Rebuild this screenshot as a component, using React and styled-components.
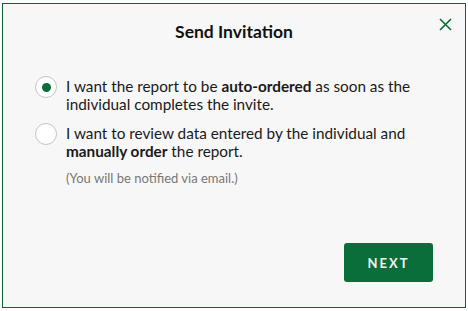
import React, { useState } from "react";
import styled, { createGlobalStyle } from "styled-components";

const GlobalStyle = createGlobalStyle`
  body {
    margin: 0;
    background: #ffffff;
    font-family: "Lato", "Open Sans", sans-serif;
  }
`;

const Modal = styled.div`
  box-sizing: border-box;
  position: relative;
  margin: 3px 0 0 2px;
  width: 464px;
  height: 305px;
  background: #f7f7f7;
  border: 1px solid #0b6336;
  display: flex;
  flex-direction: column;
  padding: 17px 32px 25px 32px;
`;

const Title = styled.h2`
  margin: 0;
  text-align: center;
  font-size: 17.5px;
  font-weight: 700;
  color: #111;
  line-height: 22px;
`;

const CloseButton = styled.button`
  position: absolute;
  top: 12px;
  right: 12px;
  border: none;
  background: none;
  padding: 0;
  width: 16px;
  height: 16px;
  cursor: pointer;
  display: flex;
  align-items: center;
  justify-content: center;
`;

const Options = styled.div`
  margin-top: 34px;
  display: flex;
  flex-direction: column;
  gap: 11px;
`;

const Option = styled.label`
  display: flex;
  align-items: flex-start;
  gap: 9px;
  cursor: pointer;
`;

const Radio = styled.span`
  box-sizing: border-box;
  flex: none;
  width: 22px;
  height: 22px;
  border-radius: 50%;
  border: 1px solid #c4c4c4;
  background: #fff;
  display: flex;
  align-items: center;
  justify-content: center;
  margin-top: -1px;

  &::after {
    content: "";
    width: 9px;
    height: 9px;
    border-radius: 50%;
    background: ${(p) => (p.$checked ? "#0b6b3a" : "transparent")};
  }
`;

const OptionText = styled.div`
  font-size: 15.3px;
  line-height: 18px;
  color: #1a1a1a;

  b {
    font-weight: 700;
  }
`;

const Note = styled.div`
  margin: 10px 0 0 31px;
  font-size: 13px;
  color: #777;
`;

const Footer = styled.div`
  margin-top: auto;
  display: flex;
  justify-content: flex-end;
`;

const NextButton = styled.button`
  width: 89px;
  height: 39px;
  border: none;
  border-radius: 3px;
  background: #0a6e3a;
  color: #f2f2f2;
  font-family: "Lato", sans-serif;
  font-size: 13px;
  font-weight: 700;
  letter-spacing: 2px;
  cursor: pointer;
`;

export default function App() {
  const [choice, setChoice] = useState("auto");

  return (
    <>
      <GlobalStyle />
      <Modal>
        <CloseButton aria-label="Close">
          <svg width="13" height="13" viewBox="0 0 13 13">
            <path d="M1 1L12 12M12 1L1 12" stroke="#0b6b3a" strokeWidth="1.6" />
          </svg>
        </CloseButton>
        <Title>Send Invitation</Title>
        <Options>
          <Option onClick={() => setChoice("auto")}>
            <Radio $checked={choice === "auto"} />
            <OptionText>
              I want the report to be <b>auto-ordered</b> as soon as the
              individual completes the invite.
            </OptionText>
          </Option>
          <div>
            <Option onClick={() => setChoice("manual")}>
              <Radio $checked={choice === "manual"} />
              <OptionText>
                I want to review data entered by the individual and{" "}
                <b>manually order</b> the report.
              </OptionText>
            </Option>
            <Note>(You will be notified via email.)</Note>
          </div>
        </Options>
        <Footer>
          <NextButton>NEXT</NextButton>
        </Footer>
      </Modal>
    </>
  );
}
